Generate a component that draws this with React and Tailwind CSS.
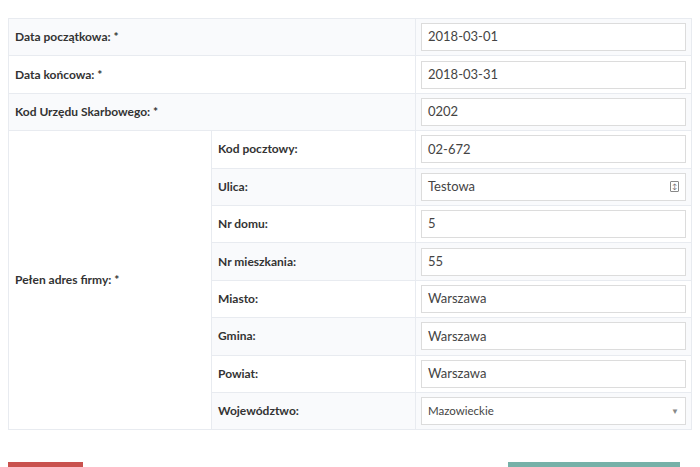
const sub = [
  ['Kod pocztowy:', '02-672'],
  ['Ulica:', 'Testowa', 'icon'],
  ['Nr domu:', '5'],
  ['Nr mieszkania:', '55'],
  ['Miasto:', 'Warszawa'],
  ['Gmina:', 'Warszawa'],
  ['Powiat:', 'Warszawa'],
  ['Województwo:', 'Mazowieckie', 'select'],
]

const Field = ({ value, kind }) => (
  <div className="flex h-[28px] items-center justify-between border border-[#dcdcdc] bg-white px-[6px] text-[13px] text-[#444]">
    <span className={kind === 'select' ? 'text-[11.5px]' : ''}>{value}</span>
    {kind === 'icon' && <span className="flex h-[11px] w-[9px] items-center justify-center rounded-[1px] border border-[#888] text-[7px] leading-none text-[#666]">↕</span>}
    {kind === 'select' && <span className="text-[8px] text-[#888]">▼</span>}
  </div>
)

const td = 'border border-[#e8ebf0] px-[6px] text-[12px] font-bold text-[#333]'

export default function App() {
  return (
    <div className="h-[467px] overflow-hidden bg-white pt-[18px] px-[8px]" style={{ fontFamily: 'Lato, "Noto Sans", sans-serif' }}>
      <table className="w-[684px] border-collapse">
        <colgroup><col className="w-[203px]" /><col className="w-[204px]" /><col /></colgroup>
        <tbody>
          {[['Data początkowa: *', '2018-03-01'], ['Data końcowa: *', '2018-03-31'], ['Kod Urzędu Skarbowego: *', '0202']].map(([l, v], i) => (
            <tr key={l} className={`h-[37.4px] ${i % 2 === 0 ? 'bg-[#f9fafc]' : 'bg-white'}`}>
              <td colSpan={2} className={td}>{l}</td>
              <td className="border border-[#e8ebf0] px-[5px]"><Field value={v} /></td>
            </tr>
          ))}
          {sub.map(([l, v, k], i) => (
            <tr key={l} className={`h-[37.4px] ${i % 2 === 0 ? 'bg-white' : 'bg-[#f9fafc]'}`}>
              {i === 0 && <td rowSpan={8} className={`${td} bg-white`}>Pełen adres firmy: *</td>}
              <td className={td}>{l}</td>
              <td className="border border-[#e8ebf0] px-[5px]"><Field value={v} kind={k} /></td>
            </tr>
          ))}
        </tbody>
      </table>
      <div className="mt-[32px] flex justify-between">
        <div className="h-[30px] w-[75px] bg-[#c9524e]" />
        <div className="mr-[12px] h-[30px] w-[172px] bg-[#76b1a8]" />
      </div>
    </div>
  )
}
